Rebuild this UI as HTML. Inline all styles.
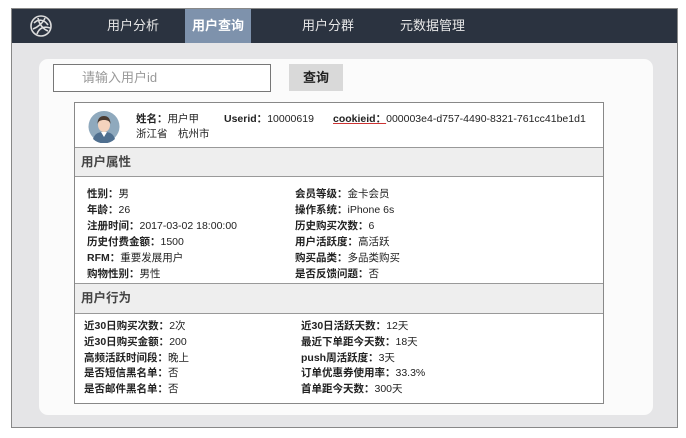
<!DOCTYPE html>
<html><head><meta charset="utf-8"><style>
*{margin:0;padding:0;box-sizing:border-box}
body{width:686px;height:438px;background:#fff;font-family:"Liberation Sans","Noto Sans CJK SC",sans-serif;position:relative;overflow:hidden;color:#222}
.frame{position:absolute;left:11px;top:8px;width:667px;height:420px;background:#e5e5e7;border:1px solid #888}
.nav{position:absolute;left:0;top:0;width:100%;height:34px;background:#2b3340}
.nav span{position:absolute;top:0;height:34px;line-height:34px;color:#e8e8e8;font-size:13px}
.nav .act{background:#7e92ac;color:#fff;font-weight:bold;text-align:center}
.card{position:absolute;left:27px;top:50px;width:614px;height:356px;background:#fbfbfb;border-radius:9px}
.a{position:absolute;font-size:10.5px;white-space:nowrap}
b{font-weight:bold}
</style></head><body>
<div class="frame">
 <div class="nav">
  <svg style="position:absolute;left:17px;top:5px" width="24" height="24" viewBox="0 0 24 24" fill="none" stroke="#ddd" stroke-width="1.6"><circle cx="12" cy="12" r="10"/><path d="M5 9c4-4 10-4 14 2M4 15c5-2 10-6 12-11M8 20c2-6 7-8 13-6M9 4c1 6 5 11 10 13"/></svg>
  <span style="left:95px">用户分析</span>
  <span class="act" style="left:173px;width:66px">用户查询</span>
  <span style="left:290px">用户分群</span>
  <span style="left:388px">元数据管理</span>
 </div>
 <div class="card"></div>
</div>
<div style="position:absolute;left:53px;top:64px;width:218px;height:28px;border:1px solid #777;background:#fff;font-size:13px;color:#999;line-height:26px;padding-left:28px">请输入用户id</div>
<div style="position:absolute;left:289px;top:64px;width:54px;height:27px;background:#d9d9d9;font-size:13px;font-weight:bold;line-height:27px;text-align:center">查询</div>
<div style="position:absolute;left:74px;top:102px;width:530px;height:302px;border:1px solid #888;background:#fff">
 <div style="position:absolute;left:0;top:44px;width:100%;height:30px;background:#eeeeee;border-top:1px solid #999;border-bottom:1px solid #999;font-size:12.5px;font-weight:bold;color:#444;line-height:28px;padding-left:6px">用户属性</div>
 <div style="position:absolute;left:0;top:180px;width:100%;height:31px;background:#eeeeee;border-top:1px solid #999;border-bottom:1px solid #999;font-size:12.5px;font-weight:bold;color:#444;line-height:29px;padding-left:6px">用户行为</div>
 <svg style="position:absolute;left:13px;top:7px" width="32" height="33" viewBox="0 0 32 33"><circle cx="16" cy="16.5" r="15.5" fill="#8fa9bd"/><path d="M5 29c2-6 6-7 11-7s9 1 11 7a16 16 0 0 1-22 0z" fill="#4f6f8f"/><path d="M13 22l3 5 3-5z" fill="#fff"/><ellipse cx="16" cy="15" rx="6" ry="7" fill="#f4d3bd"/><path d="M9.5 14c0-6 3-8 6.5-8s6.5 2 6.5 8c-1-3-3-4-6.5-4s-5.5 1-6.5 4z" fill="#4a3a30"/></svg>
</div>
<div class="a" style="left:136px;top:111px"><b>姓名：</b>用户甲</div>
<div class="a" style="left:224px;top:111px"><b>Userid：</b>10000619</div>
<div class="a" style="left:333px;top:111px"><b style="text-decoration:underline;text-decoration-color:#c33">cookieid：</b>000003e4-d757-4490-8321-761cc41be1d1</div>
<div class="a" style="left:136px;top:126px">浙江省　杭州市</div>
<div class="a" style="left:87px;top:186px;line-height:16px"><b>性别：</b>男<br><b>年龄：</b>26<br><b>注册时间：</b>2017-03-02 18:00:00<br><b>历史付费金额：</b>1500<br><b>RFM：</b>重要发展用户<br><b>购物性别：</b>男性</div>
<div class="a" style="left:295px;top:186px;line-height:16px"><b>会员等级：</b>金卡会员<br><b>操作系统：</b>iPhone 6s<br><b>历史购买次数：</b>6<br><b>用户活跃度：</b>高活跃<br><b>购买品类：</b>多品类购买<br><b>是否反馈问题：</b>否</div>
<div class="a" style="left:84px;top:319px;line-height:15.8px"><b>近30日购买次数：</b>2次<br><b>近30日购买金额：</b>200<br><b>高频活跃时间段：</b>晚上<br><b>是否短信黑名单：</b>否<br><b>是否邮件黑名单：</b>否</div>
<div class="a" style="left:301px;top:319px;line-height:15.8px"><b>近30日活跃天数：</b>12天<br><b>最近下单距今天数：</b>18天<br><b>push周活跃度：</b>3天<br><b>订单优惠券使用率：</b>33.3%<br><b>首单距今天数：</b>300天</div>
</body></html>
